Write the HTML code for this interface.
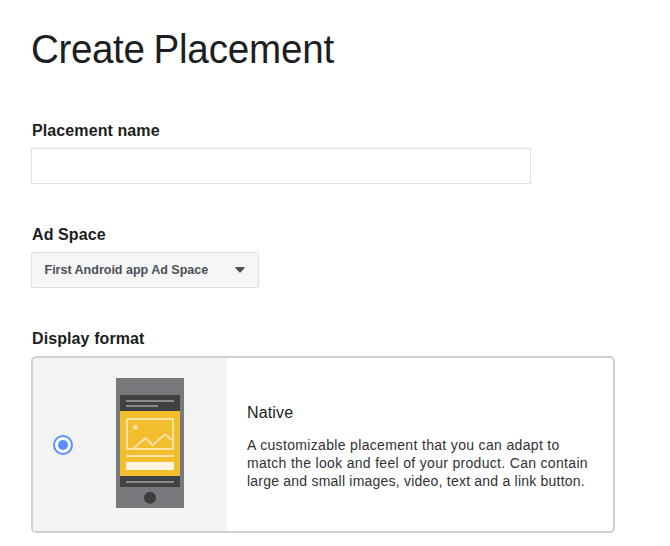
<!DOCTYPE html>
<html><head><meta charset="utf-8">
<style>
html,body{margin:0;padding:0;background:#fff;}
body{width:670px;height:546px;overflow:hidden;position:relative;font-family:"Liberation Sans",sans-serif;color:#1c1e21;}
.abs{position:absolute;}
h1{position:absolute;left:31px;top:26px;margin:0;font-size:40px;font-weight:normal;line-height:46px;color:#1c1e21;white-space:nowrap;letter-spacing:-0.4px;transform:scaleX(0.965);transform-origin:0 0;}
.lbl{position:absolute;left:32px;margin:0;font-size:16px;font-weight:bold;line-height:20px;color:#1c1e21;white-space:nowrap;letter-spacing:0.1px;}
.input{position:absolute;left:31px;top:148px;width:498px;height:34px;border:1px solid #dddfe2;}
.sel{position:absolute;left:31px;top:252px;width:226px;height:34px;border:1px solid #dddfe2;background:#f5f6f7;border-radius:2px;}
.sel span{position:absolute;left:12.5px;top:10px;font-size:12.5px;line-height:14px;font-weight:bold;color:#4b4f56;white-space:nowrap;}
.caret{position:absolute;left:203px;top:14px;width:0;height:0;border-left:5px solid transparent;border-right:5px solid transparent;border-top:6px solid #4b4f56;}
.card{position:absolute;left:31px;top:356px;width:580px;height:173px;border:2px solid #ccd0d5;border-radius:5px;overflow:hidden;}
.left{position:absolute;left:0;top:0;width:194px;height:100%;background:#f2f3f3;}
.radio{position:absolute;left:20px;top:77px;width:20px;height:20px;border:2px solid #5890ff;border-radius:50%;background:#fff;box-sizing:border-box;}
.radio:after{content:"";position:absolute;left:3px;top:3px;width:10px;height:10px;border-radius:50%;background:#5890ff;}
.title{position:absolute;left:214px;top:46px;font-size:16px;letter-spacing:0.15px;color:#1c1e21;white-space:nowrap;}
.desc{position:absolute;left:214px;top:78px;font-size:14px;line-height:18px;letter-spacing:0.28px;color:#303236;white-space:nowrap;}
</style></head>
<body>
<h1>Create<span style="letter-spacing:-0.2px;margin-left:9.2px">Placement</span></h1>
<div class="lbl" style="top:121px">Placement name</div>
<div class="input"></div>
<div class="lbl" style="top:225px">Ad Space</div>
<div class="sel"><span>First Android app Ad Space</span><svg class="abs" style="left:202px;top:13px" width="12" height="8" viewBox="0 0 12 8"><path d="M1.9,1.5 L10.1,1.5 L6,6.1 Z" fill="#4b4f56" stroke="#4b4f56" stroke-width="1.2" stroke-linejoin="round"/></svg></div>
<div class="lbl" style="top:329px">Display format</div>
<div class="card">
  <div class="left">
    <div class="radio"></div>
    <svg class="abs" style="left:83px;top:20px" width="68" height="130" viewBox="0 0 68 130">
      <rect x="0" y="0" width="68" height="130" fill="#78797c"/>
      <rect x="4" y="17" width="60" height="92" fill="#404143"/>
      <rect x="10" y="22" width="48" height="2" fill="#8a8b8d"/>
      <rect x="10" y="27" width="32" height="2" fill="#8a8b8d"/>
      <rect x="4" y="33" width="60" height="65" fill="#f2be2e"/>
      <rect x="11" y="41" width="46" height="30" fill="none" stroke="#f6e2a6" stroke-width="2"/>
      <circle cx="19.4" cy="49.3" r="2.5" fill="#f6e2a6"/>
      <polyline points="17.3,70.6 29.5,59.9 36.5,67.2 49.1,56.3 57,63" fill="none" stroke="#f6e2a6" stroke-width="2"/>
      <rect x="10" y="77" width="48" height="2" fill="#f6e2a6"/>
      <rect x="10" y="84" width="48" height="8" fill="#fff4df"/>
      <rect x="10" y="103" width="48" height="2" fill="#8a8b8d"/>
      <circle cx="34" cy="119.7" r="6" fill="#3d3e40"/>
    </svg>
  </div>
  <div class="title">Native</div>
  <div class="desc"><span style="letter-spacing:0.335px">A customizable placement that you can adapt to</span><br><span style="letter-spacing:0.315px">match the look and feel of your product. Can contain</span><br><span style="letter-spacing:0.22px">large and small images, video, text and a link button.</span></div>
</div>
</body></html>
